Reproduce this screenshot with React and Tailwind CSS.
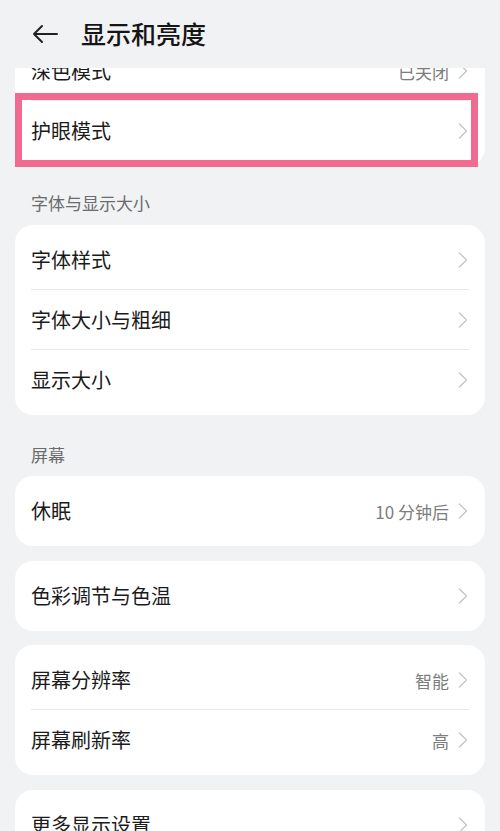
import { ChevronRight } from "lucide-react";

const font = { fontFamily: '"Noto Sans CJK SC", "Noto Sans", sans-serif' };

function Row({ label, value, divider }) {
  return (
    <div className="relative flex h-[60px] items-center pl-4 pr-[8px]">
      <span className="flex-1 text-[20px] leading-none text-[#1b1b1b]">{label}</span>
      {value && <span className="text-[17px] leading-none text-[#7d7d7d]">{value}</span>}
      <ChevronRight className="h-7 w-7 text-[#c4c4c4]" strokeWidth={1.1} />
      {divider && <div className="absolute bottom-0 left-4 right-4 h-px bg-[#e9e9e9]" />}
    </div>
  );
}

function Card({ children, className = "" }) {
  return <div className={`rounded-[18px] bg-white py-[5px] ${className}`}>{children}</div>;
}

function Label({ children }) {
  return <div className="px-4 text-[17px] leading-none text-[#6b6b6b]">{children}</div>;
}

export default function App() {
  return (
    <div className="h-[831px] w-[500px] overflow-hidden bg-[#f1f2f4]" style={font}>
      {/* HEADER */}
      <div className="flex h-[68px] items-center pl-[31px]">
        <svg width="28" height="22" viewBox="0 0 28 22" fill="none" stroke="#222" strokeWidth="2" strokeLinecap="round" strokeLinejoin="round">
          <path d="M26 11H3M11 3L3 11l8 8" />
        </svg>
        <span className="ml-[22px] text-[25px] font-medium text-[#151515]">显示和亮度</span>
      </div>

      {/* CONTENT (scrolled) */}
      <div className="h-[763px] overflow-hidden px-[15px]">
        <div className="relative mt-[-32px]">
          <Card>
            <Row label="深色模式" value="已关闭" divider />
            <Row label="护眼模式" />
          </Card>
          {/* highlight box */}
          <div className="absolute left-0 top-[57px] h-[74px] w-[463px] border-[7px] border-[#ef6b8f]" />
        </div>

        <div className="mt-[28px]">
          <Label>字体与显示大小</Label>
        </div>
        <Card className="mt-[14px]">
          <Row label="字体样式" divider />
          <Row label="字体大小与粗细" divider />
          <Row label="显示大小" />
        </Card>

        <div className="mt-[31px]">
          <Label>屏幕</Label>
        </div>
        <Card className="mt-[13px]">
          <Row label="休眠" value="10 分钟后" />
        </Card>

        <Card className="mt-[15px]">
          <Row label="色彩调节与色温" />
        </Card>

        <Card className="mt-[14px]">
          <Row label="屏幕分辨率" value="智能" divider />
          <Row label="屏幕刷新率" value="高" />
        </Card>

        <Card className="mt-[15px]">
          <Row label="更多显示设置" />
        </Card>
      </div>
    </div>
  );
}
